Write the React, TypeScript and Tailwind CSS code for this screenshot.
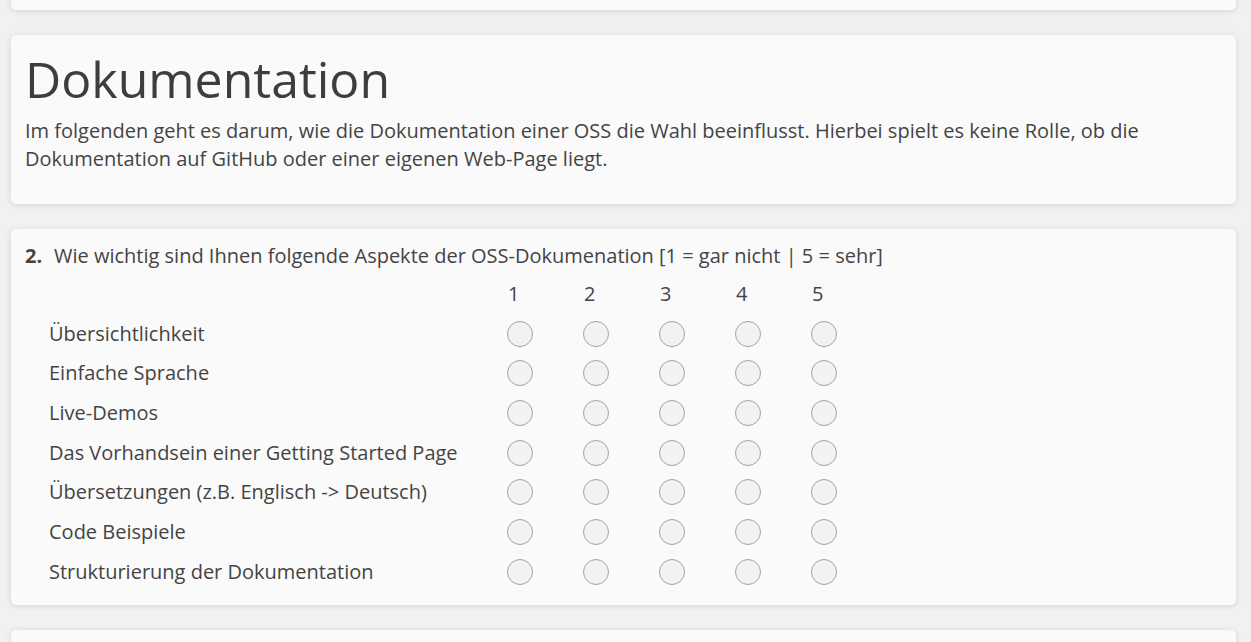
const aspects = [
  "Übersichtlichkeit",
  "Einfache Sprache",
  "Live-Demos",
  "Das Vorhandsein einer Getting Started Page",
  "Übersetzungen (z.B. Englisch -> Deutsch)",
  "Code Beispiele",
  "Strukturierung der Dokumentation",
];

const scale = [1, 2, 3, 4, 5];

function Card({ className = "", children }: { className?: string; children?: React.ReactNode }) {
  return (
    <div className={`rounded-[5px] bg-[#fafafa] shadow-[0_1px_6px_rgba(0,0,0,0.12)] ${className}`}>
      {children}
    </div>
  );
}

function Radio() {
  return <span className="block h-[26px] w-[26px] rounded-full border border-[#a3a3a3] bg-[#f2f2f2]" />;
}

export default function App() {
  return (
    <div className="h-[642px] overflow-hidden bg-[#f1f1f1] pl-[11px] pr-[15px] font-['Open_Sans',sans-serif] text-[#444]">
      <div className="-mt-[40px] flex flex-col gap-[25px]">
        <Card className="h-[50px]" />

        <Card className="px-[14px] pt-[14px] pb-[31px]">
          <h1 className="text-[50px] leading-[60px] font-normal text-[#3d3d3d]">Dokumentation</h1>
          <p className="mt-[8px] text-[20px] leading-[28px]">
            Im folgenden geht es darum, wie die Dokumentation einer OSS die Wahl beeinflusst. Hierbei spielt es keine Rolle, ob die
            Dokumentation auf GitHub oder einer eigenen Web-Page liegt.
          </p>
        </Card>

        <Card className="px-[14px] pt-[13px] pb-[13px]">
          <div className="flex text-[20px] leading-[28px]">
            <span className="w-[29px] font-bold">2.</span>
            <span>Wie wichtig sind Ihnen folgende Aspekte der OSS-Dokumenation [1 = gar nicht | 5 = sehr]</span>
          </div>
          <div className="mt-[4px] pl-[24px] text-[20px]">
            <div className="flex h-[39.7px] items-center">
              <div className="w-[458px]" />
              {scale.map((n) => (
                <div key={n} className="w-[76px] pl-[1px]">
                  {n}
                </div>
              ))}
            </div>
            {aspects.map((a) => (
              <div key={a} className="flex h-[39.7px] items-center">
                <div className="w-[458px]">{a}</div>
                {scale.map((n) => (
                  <div key={n} className="w-[76px]">
                    <Radio />
                  </div>
                ))}
              </div>
            ))}
          </div>
        </Card>

        <Card className="h-[60px]" />
      </div>
    </div>
  );
}
